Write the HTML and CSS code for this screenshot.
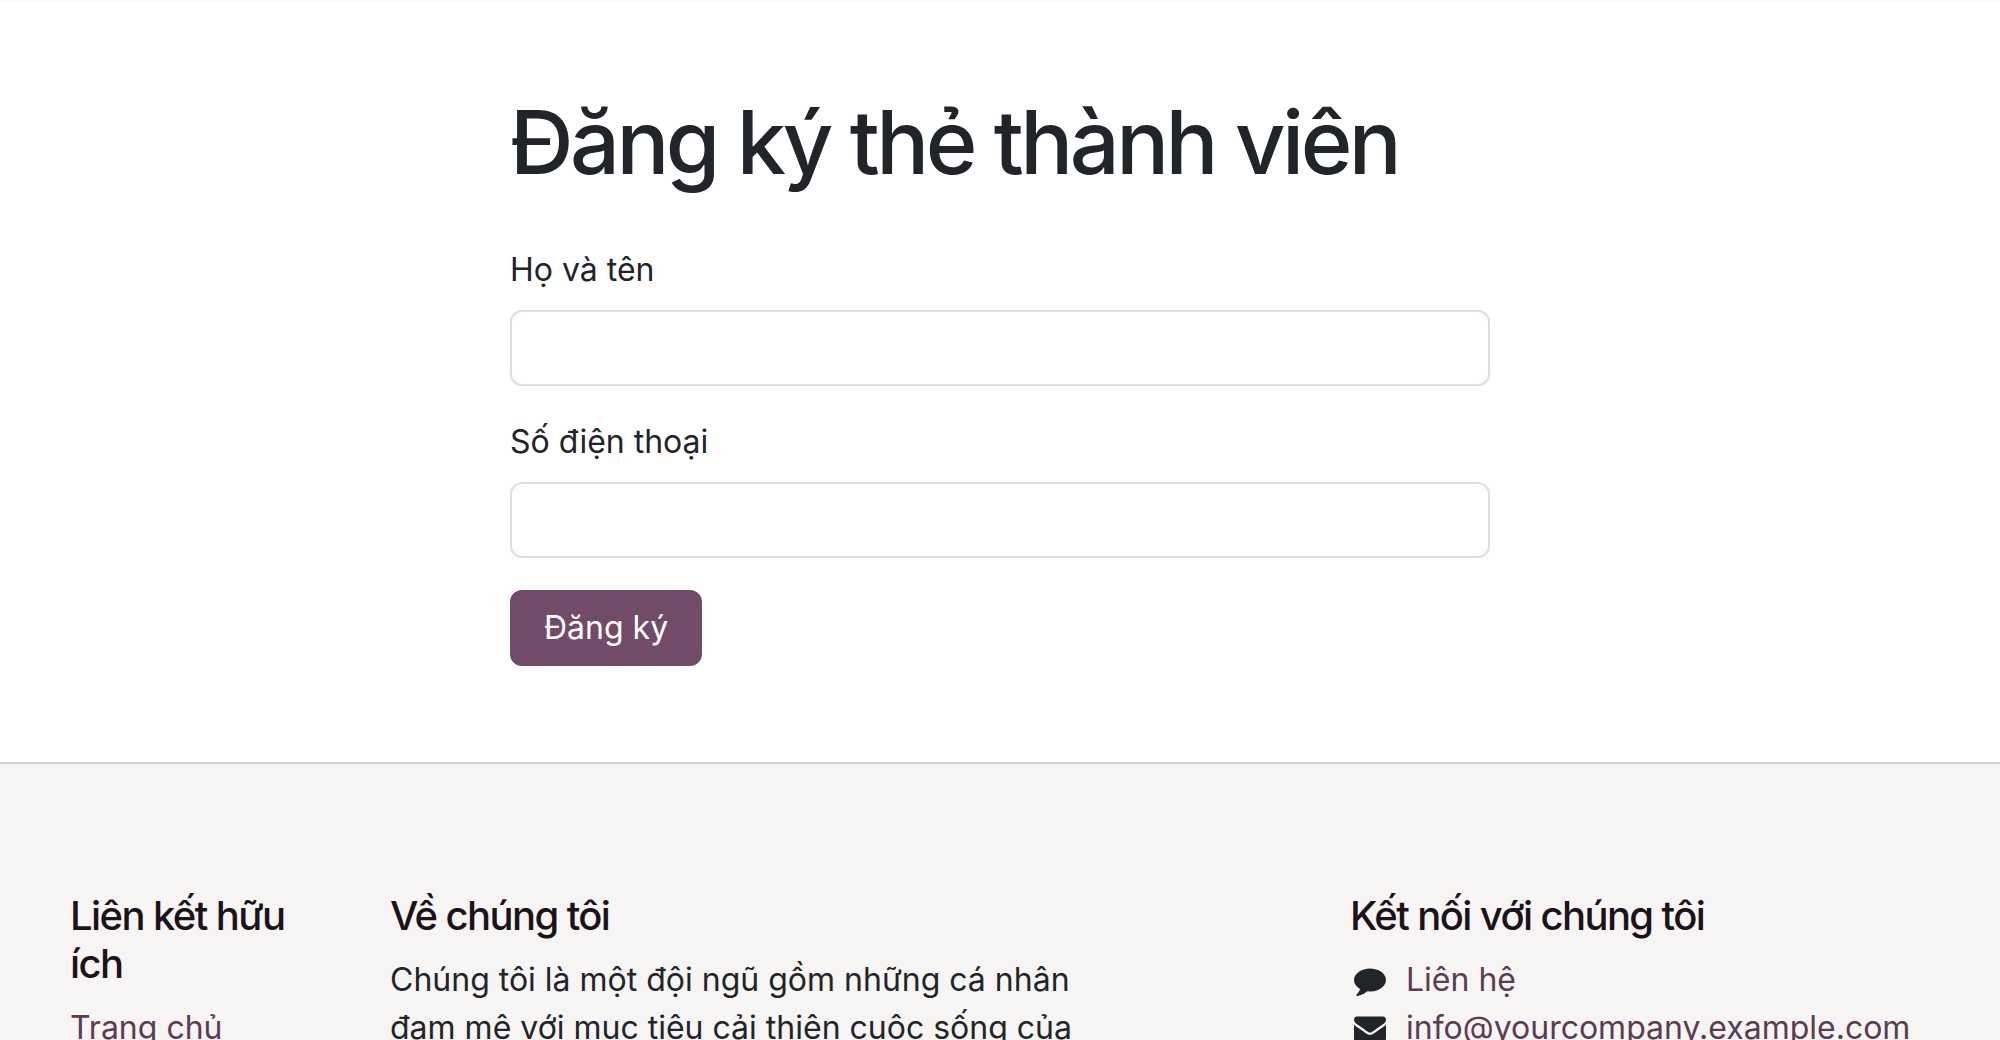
FILE: index.html
```html
<!DOCTYPE html>
<html lang="vi">
<head>
<meta charset="utf-8">
<meta name="viewport" content="width=device-width, initial-scale=1">
<title>Đăng ký thẻ thành viên</title>
<link rel="stylesheet" href="styles.css">
</head>
<body>
<main class="main">
  <form class="signup">
    <h1 class="signup-title">Đăng ký thẻ thành viên</h1>
    <div class="field">
      <label class="field-label" for="name">Họ và tên</label>
      <input class="field-input" id="name" type="text">
    </div>
    <div class="field">
      <label class="field-label" for="phone">Số điện thoại</label>
      <input class="field-input" id="phone" type="tel">
    </div>
    <button class="button" type="submit">Đăng ký</button>
  </form>
</main>
<footer class="footer">
  <section class="footer-column footer-links">
    <h2 class="footer-title">Liên kết hữu ích</h2>
    <a class="link" href="#">Trang chủ</a>
  </section>
  <section class="footer-column footer-about">
    <h2 class="footer-title">Về chúng tôi</h2>
    <p class="text">Chúng tôi là một đội ngũ gồm những cá nhân đam mê với mục tiêu cải thiện cuộc sống của</p>
  </section>
  <section class="footer-column footer-contact">
    <h2 class="footer-title">Kết nối với chúng tôi</h2>
    <ul class="contacts">
      <li class="contact">
        <svg class="icon" viewBox="0 0 1792 1792" aria-hidden="true"><path d="M1792 896q0 174-120 321.500t-326 233-450 85.500q-70 0-145-8-198 175-460 242-49 14-114 22-17 2-30.500-9t-17.500-29v-1q-3-4-.5-12t2-10 4.500-9.500l6-9 7-8.500 8-9q7-8 31-34.500t34.500-38 31-39.500 32.500-51 27-59 26-76q-157-89-247.500-220t-90.500-281q0-130 71-248.500t191-204.500 286-136.500 348-50.500q244 0 450 85.500t326 233 120 321.500z"/></svg>
        <a class="link" href="#">Liên hệ</a>
      </li>
      <li class="contact">
        <svg class="icon" viewBox="0 0 1792 1792" aria-hidden="true"><path d="M1792 710v794q0 66-47 113t-113 47h-1472q-66 0-113-47t-47-113v-794q44 49 101 87 362 246 497 345 57 42 92.500 65.500t94.500 48 110 24.500h2q51 0 110-24.500t94.500-48 92.500-65.500q170-123 498-345 57-39 100-87zm0-294q0 79-49 151t-122 123q-376 261-468 325-10 7-42.500 31t-54 38.500-52 32.500-57.500 27-50 9h-2q-23 0-50-9t-57.500-27-52-32.500-54-38.500-42.500-31q-91-64-262-182.500t-205-142.500q-62-42-117-115.500t-55-136.500q0-78 41.500-130t118.500-52h1472q65 0 112.500 47t47.500 113z"/></svg>
        <a class="link" href="mailto:info@yourcompany.example.com">info@yourcompany.example.com</a>
      </li>
    </ul>
  </section>
</footer>
</body>
</html>
```
FILE: styles.css
```css
* {
  box-sizing: border-box;
}

body {
  margin: 0;
  border-top: 2px solid #fafafa;
  background: #fff;
  color: #212529;
  font: 400 32px/48px Inter, "Noto Sans", sans-serif;
}

h1, h2, p, ul {
  margin: 0;
  padding: 0;
}

.main {
  padding: 88px 32px 96px;
}

.signup {
  max-width: 980px;
  margin: 0 auto;
}

.signup-title {
  margin-bottom: 52px;
  font-size: 88px;
  font-weight: 500;
  line-height: 104px;
  letter-spacing: -0.04em;
}

.field {
  margin-bottom: 32px;
}

.field-label {
  display: block;
  margin-bottom: 16px;
}

.field-input {
  display: block;
  width: 100%;
  height: 76px;
  padding: 12px 24px;
  border: 2px solid #dedede;
  border-radius: 12px;
  background: #fff;
  color: inherit;
  font: inherit;
}

.button {
  display: block;
  height: 76px;
  padding: 12px 32px;
  border: 2px solid #714b67;
  border-radius: 12px;
  background: #714b67;
  color: #fff;
  font: inherit;
}

.footer {
  display: grid;
  grid-template-columns: repeat(12, minmax(0, 1fr));
  padding: 128px 40px;
  border-top: 2px solid #d2d2d2;
  background: #f6f5f4;
}

.footer-column {
  padding: 0 30px;
}

.footer-links {
  grid-column: span 2;
}

.footer-about {
  grid-column: span 5;
}

.footer-contact {
  grid-column: 9 / span 4;
}

.footer-title {
  margin-bottom: 16px;
  color: #1b1319;
  font-size: 40px;
  font-weight: 500;
  line-height: 48px;
  letter-spacing: -0.04em;
}

.link {
  color: #5b3c53;
  text-decoration: none;
}

.contacts {
  list-style: none;
}

.contact {
  display: flex;
  align-items: center;
  gap: 16px;
}

.icon {
  width: 40px;
  height: 32px;
  fill: currentColor;
}
```
